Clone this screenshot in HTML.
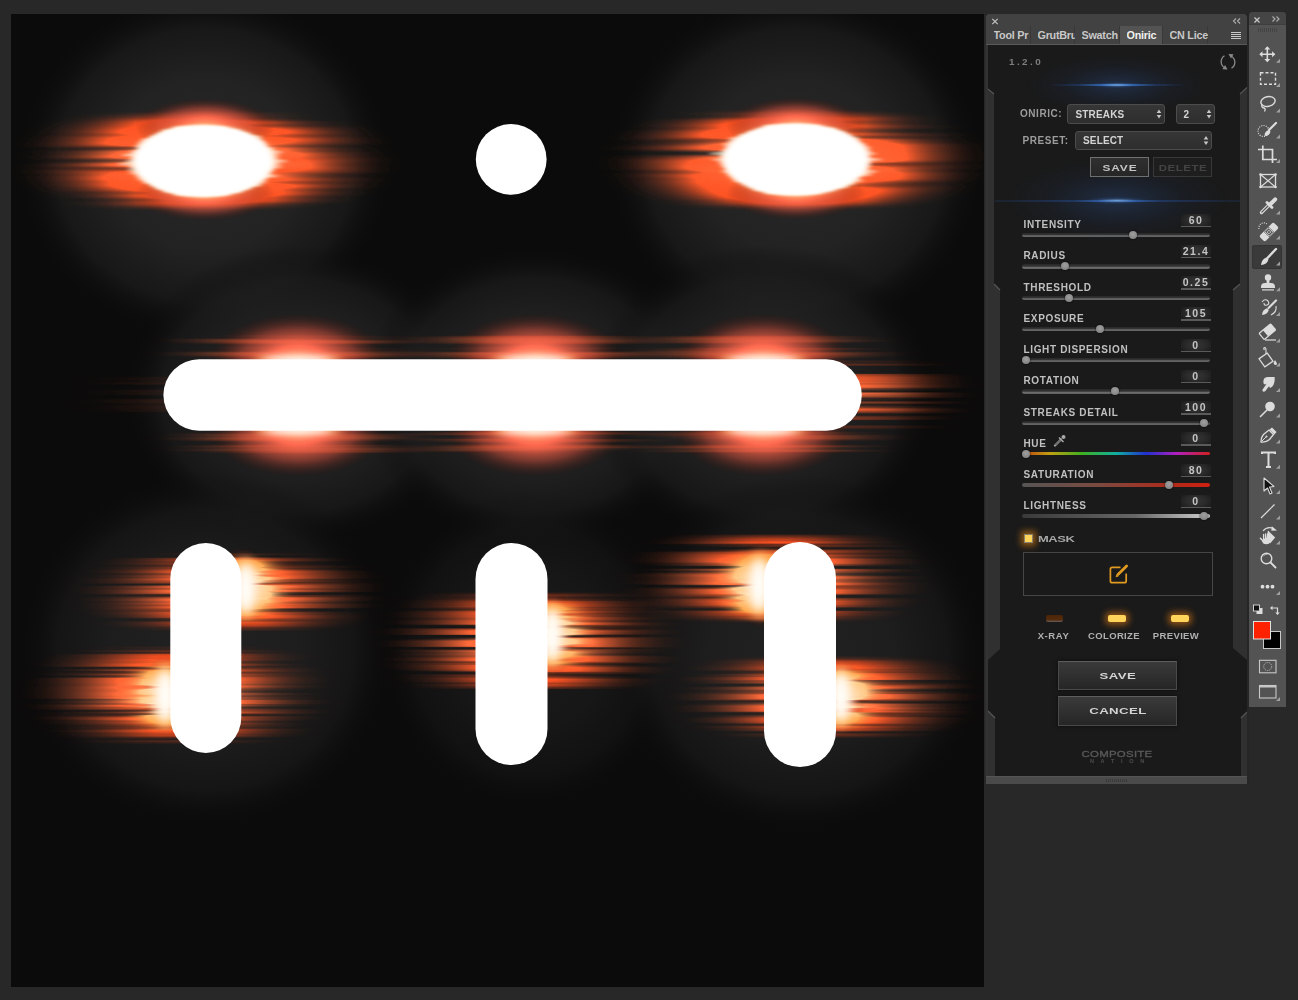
<!DOCTYPE html>
<html><head><meta charset="utf-8"><style>
html,body{margin:0;padding:0;}
body{width:1298px;height:1000px;background:#282828;position:relative;overflow:hidden;font-family:"Liberation Sans", sans-serif;}
.abs{position:absolute;}
.t{position:absolute;white-space:nowrap;font-family:"Liberation Sans", sans-serif;}
</style></head><body>
<svg class="abs" width="1298" height="1000" style="left:0;top:0">
<defs>
<clipPath id="cv"><rect x="11" y="14" width="973" height="973"/></clipPath>
<radialGradient id="halo"><stop offset="0" stop-color="#2c2c2c"/><stop offset="0.5" stop-color="#252525"/><stop offset="0.78" stop-color="#1c1c1c" stop-opacity="0.85"/><stop offset="1" stop-color="#0b0b0b" stop-opacity="0"/></radialGradient>
<radialGradient id="src"><stop offset="0" stop-color="#ff9060"/><stop offset="0.55" stop-color="#ff6030"/><stop offset="0.85" stop-color="#ff5020" stop-opacity="0.8"/><stop offset="1" stop-color="#ff5020" stop-opacity="0"/></radialGradient>
<radialGradient id="red"><stop offset="0" stop-color="#ffa070"/><stop offset="0.3" stop-color="#ff6a50"/><stop offset="0.65" stop-color="#c04a38" stop-opacity="0.55"/><stop offset="1" stop-color="#401008" stop-opacity="0"/></radialGradient>
<radialGradient id="hot"><stop offset="0" stop-color="#ffffff"/><stop offset="0.6" stop-color="#fffaf0"/><stop offset="0.82" stop-color="#ffc870" stop-opacity="0.8"/><stop offset="1" stop-color="#ff7040" stop-opacity="0"/></radialGradient>
<radialGradient id="hot2"><stop offset="0" stop-color="#ffffff"/><stop offset="0.4" stop-color="#fff2c8"/><stop offset="0.7" stop-color="#ffb050" stop-opacity="0.85"/><stop offset="1" stop-color="#ff7030" stop-opacity="0"/></radialGradient>
<radialGradient id="hot3"><stop offset="0" stop-color="#ffffff"/><stop offset="0.75" stop-color="#fff8e8"/><stop offset="0.9" stop-color="#ffc070" stop-opacity="0.9"/><stop offset="1" stop-color="#ff7030" stop-opacity="0"/></radialGradient>
<filter id="sk" filterUnits="userSpaceOnUse" x="11" y="14" width="973" height="973" color-interpolation-filters="sRGB">
 <feTurbulence type="fractalNoise" baseFrequency="0.01 0.17" numOctaves="2" seed="5" result="n"/>
 <feColorMatrix in="n" type="matrix" values="0 0 0 0 0  0 0 0 0 0  0 0 0 0 0  5 0 0 0 -1.75" result="m"/>
 <feComposite in="SourceGraphic" in2="m" operator="in" result="c"/>
 <feGaussianBlur in="c" stdDeviation="45 0.7" result="b"/>
 <feComponentTransfer in="b"><feFuncA type="linear" slope="2.4"/></feComponentTransfer>
</filter>
<filter id="skb" filterUnits="userSpaceOnUse" x="11" y="14" width="973" height="973" color-interpolation-filters="sRGB">
 <feTurbulence type="fractalNoise" baseFrequency="0.01 0.12" numOctaves="2" seed="3" result="n"/>
 <feColorMatrix in="n" type="matrix" values="0 0 0 0 0  0 0 0 0 0  0 0 0 0 0  4.5 0 0 0 -1.35" result="m"/>
 <feComposite in="SourceGraphic" in2="m" operator="in" result="c"/>
 <feGaussianBlur in="c" stdDeviation="44 0.8" result="b"/>
 <feComponentTransfer in="b"><feFuncA type="linear" slope="3.3"/></feComponentTransfer>
</filter>
<filter id="sk2" filterUnits="userSpaceOnUse" x="11" y="14" width="973" height="973" color-interpolation-filters="sRGB">
 <feTurbulence type="fractalNoise" baseFrequency="0.01 0.16" numOctaves="2" seed="8" result="n"/>
 <feColorMatrix in="n" type="matrix" values="0 0 0 0 0  0 0 0 0 0  0 0 0 0 0  4 0 0 0 -1.1" result="m"/>
 <feComposite in="SourceGraphic" in2="m" operator="in" result="c"/>
 <feGaussianBlur in="c" stdDeviation="14 0.5" result="b"/>
 <feComponentTransfer in="b"><feFuncA type="linear" slope="3"/></feComponentTransfer>
</filter>
<filter id="bl6" x="-50%" y="-50%" width="200%" height="200%"><feGaussianBlur stdDeviation="5 3"/></filter>
<filter id="bl3" x="-50%" y="-50%" width="200%" height="200%"><feGaussianBlur stdDeviation="3 1.5"/></filter>
<filter id="bl15" x="-50%" y="-50%" width="200%" height="200%"><feGaussianBlur stdDeviation="2.5 1"/></filter>
</defs>
<g clip-path="url(#cv)">
<rect x="11" y="14" width="973" height="973" fill="#0b0b0b"/>
<ellipse cx="205" cy="165" rx="190" ry="175" fill="url(#halo)" opacity="0.9"/>
<ellipse cx="796" cy="165" rx="190" ry="175" fill="url(#halo)" opacity="0.9"/>
<ellipse cx="298" cy="395" rx="175" ry="150" fill="url(#halo)" opacity="0.85"/>
<ellipse cx="535" cy="395" rx="175" ry="150" fill="url(#halo)" opacity="0.85"/>
<ellipse cx="763" cy="395" rx="175" ry="150" fill="url(#halo)" opacity="0.85"/>
<ellipse cx="206" cy="650" rx="190" ry="180" fill="url(#halo)" opacity="0.7"/>
<ellipse cx="530" cy="650" rx="150" ry="160" fill="url(#halo)" opacity="0.45"/>
<ellipse cx="800" cy="655" rx="190" ry="180" fill="url(#halo)" opacity="0.7"/>
<g filter="url(#skb)">
<ellipse cx="205" cy="161" rx="98" ry="50" fill="url(#src)"/>
<ellipse cx="796" cy="160" rx="100" ry="50" fill="url(#src)"/>
</g>
<g filter="url(#sk)">
<ellipse cx="298" cy="340" rx="55" ry="5" fill="url(#src)" opacity="0.55"/>
<ellipse cx="535" cy="340" rx="55" ry="5" fill="url(#src)" opacity="0.55"/>
<ellipse cx="763" cy="340" rx="55" ry="5" fill="url(#src)" opacity="0.55"/>
<ellipse cx="298" cy="449" rx="55" ry="5" fill="url(#src)" opacity="0.55"/>
<ellipse cx="535" cy="449" rx="55" ry="5" fill="url(#src)" opacity="0.55"/>
<ellipse cx="763" cy="449" rx="55" ry="5" fill="url(#src)" opacity="0.55"/>
<ellipse cx="298" cy="353" rx="60" ry="6" fill="url(#src)" opacity="0.55"/>
<ellipse cx="535" cy="353" rx="60" ry="6" fill="url(#src)" opacity="0.55"/>
<ellipse cx="763" cy="353" rx="60" ry="6" fill="url(#src)" opacity="0.55"/>
<ellipse cx="298" cy="437" rx="60" ry="6" fill="url(#src)" opacity="0.55"/>
<ellipse cx="535" cy="437" rx="60" ry="6" fill="url(#src)" opacity="0.55"/>
<ellipse cx="763" cy="437" rx="60" ry="6" fill="url(#src)" opacity="0.55"/>
<ellipse cx="848" cy="395" rx="30" ry="36" fill="url(#src)" opacity="1"/>
<ellipse cx="172" cy="395" rx="6" ry="24" fill="url(#src)" opacity="0.5"/>
<ellipse cx="230" cy="592" rx="62" ry="40" fill="url(#src)" opacity="1"/>
<ellipse cx="178" cy="695" rx="62" ry="50" fill="url(#src)" opacity="1"/>
<ellipse cx="530" cy="642" rx="60" ry="52" fill="url(#src)" opacity="1"/>
<ellipse cx="776" cy="578" rx="60" ry="46" fill="url(#src)" opacity="1"/>
<ellipse cx="825" cy="697" rx="62" ry="42" fill="url(#src)" opacity="1"/>
</g>
<ellipse cx="205" cy="126" rx="70" ry="28" fill="url(#red)" opacity="1"/>
<ellipse cx="796" cy="125" rx="70" ry="28" fill="url(#red)" opacity="1"/>
<ellipse cx="205" cy="195" rx="70" ry="26" fill="url(#red)" opacity="0.9"/>
<ellipse cx="796" cy="194" rx="70" ry="26" fill="url(#red)" opacity="0.9"/>
<ellipse cx="298" cy="359" rx="88" ry="46" fill="url(#red)" opacity="1"/>
<ellipse cx="535" cy="359" rx="88" ry="46" fill="url(#red)" opacity="1"/>
<ellipse cx="763" cy="359" rx="88" ry="46" fill="url(#red)" opacity="1"/>
<ellipse cx="298" cy="431" rx="88" ry="46" fill="url(#red)" opacity="1"/>
<ellipse cx="535" cy="431" rx="88" ry="46" fill="url(#red)" opacity="1"/>
<ellipse cx="763" cy="431" rx="88" ry="46" fill="url(#red)" opacity="1"/>
<ellipse cx="240" cy="588" rx="30" ry="42" fill="url(#red)" opacity="0.6"/>
<ellipse cx="172" cy="695" rx="30" ry="45" fill="url(#red)" opacity="0.6"/>
<ellipse cx="547" cy="635" rx="30" ry="45" fill="url(#red)" opacity="0.6"/>
<ellipse cx="764" cy="585" rx="30" ry="45" fill="url(#red)" opacity="0.6"/>
<ellipse cx="836" cy="697" rx="30" ry="42" fill="url(#red)" opacity="0.6"/>
<g filter="url(#sk2)">
<ellipse cx="241" cy="588" rx="30" ry="36" fill="url(#hot2)"/>
<ellipse cx="170" cy="696" rx="30" ry="38" fill="url(#hot2)"/>
<ellipse cx="547" cy="635" rx="30" ry="38" fill="url(#hot2)"/>
<ellipse cx="764" cy="585" rx="30" ry="38" fill="url(#hot2)"/>
<ellipse cx="836" cy="697" rx="30" ry="36" fill="url(#hot2)"/>
</g>
<ellipse cx="204" cy="161" rx="74" ry="40" fill="url(#hot)" filter="url(#bl6)"/>
<ellipse cx="796" cy="160" rx="77" ry="40" fill="url(#hot)" filter="url(#bl6)"/>
<ellipse cx="298" cy="359" rx="48" ry="5" fill="url(#hot)" filter="url(#bl6)"/>
<ellipse cx="535" cy="359" rx="48" ry="5" fill="url(#hot)" filter="url(#bl6)"/>
<ellipse cx="763" cy="359" rx="48" ry="5" fill="url(#hot)" filter="url(#bl6)"/>
<ellipse cx="298" cy="431" rx="48" ry="5" fill="url(#hot)" filter="url(#bl6)"/>
<ellipse cx="535" cy="431" rx="48" ry="5" fill="url(#hot)" filter="url(#bl6)"/>
<ellipse cx="763" cy="431" rx="48" ry="5" fill="url(#hot)" filter="url(#bl6)"/>
<ellipse cx="246" cy="588" rx="14" ry="34" fill="url(#hot)" filter="url(#bl6)"/>
<ellipse cx="165" cy="696" rx="14" ry="36" fill="url(#hot)" filter="url(#bl6)"/>
<ellipse cx="552" cy="635" rx="14" ry="36" fill="url(#hot)" filter="url(#bl6)"/>
<ellipse cx="759" cy="585" rx="14" ry="36" fill="url(#hot)" filter="url(#bl6)"/>
<ellipse cx="841" cy="697" rx="14" ry="34" fill="url(#hot)" filter="url(#bl6)"/>
<g fill="#fff">
<circle cx="511.2" cy="159.4" r="35.4"/>
<rect x="163.4" y="359.3" width="698.4" height="71.5" rx="35.75"/>
<rect x="170.3" y="543" width="71" height="210" rx="35.5"/>
<rect x="475.5" y="543" width="72" height="222" rx="36"/>
<rect x="764" y="542" width="72" height="225" rx="36"/>
</g>
<g fill="#fff" filter="url(#bl15)">
<ellipse cx="200.3" cy="128" rx="28.4" ry="2.2" fill="#fff8e0"/>
<ellipse cx="200.7" cy="131" rx="40.0" ry="2.2" fill="#fff8e0"/>
<ellipse cx="202.7" cy="134" rx="47.0" ry="2.2" fill="#fff8e0"/>
<ellipse cx="205.9" cy="137" rx="57.1" ry="2.2" fill="#fff8e0"/>
<ellipse cx="201.3" cy="140" rx="62.2" ry="2.2" fill="#fff8e0"/>
<ellipse cx="201.7" cy="143" rx="65.4" ry="2.2" fill="#fff8e0"/>
<ellipse cx="200.3" cy="146" rx="66.2" ry="2.2" fill="#fff8e0"/>
<ellipse cx="206.9" cy="149" rx="69.3" ry="2.2" fill="#fff8e0"/>
<ellipse cx="206.0" cy="152" rx="78.0" ry="2.2" fill="#fff8e0"/>
<ellipse cx="201.0" cy="155" rx="80.0" ry="2.2" fill="#fff8e0"/>
<ellipse cx="204.5" cy="158" rx="75.6" ry="2.2" fill="#fff8e0"/>
<ellipse cx="206.3" cy="161" rx="82.2" ry="2.2" fill="#fff8e0"/>
<ellipse cx="200.2" cy="164" rx="82.9" ry="2.2" fill="#fff8e0"/>
<ellipse cx="204.9" cy="167" rx="77.8" ry="2.2" fill="#fff8e0"/>
<ellipse cx="200.9" cy="170" rx="74.6" ry="2.2" fill="#fff8e0"/>
<ellipse cx="200.2" cy="173" rx="71.8" ry="2.2" fill="#fff8e0"/>
<ellipse cx="206.4" cy="176" rx="72.4" ry="2.2" fill="#fff8e0"/>
<ellipse cx="201.9" cy="179" rx="65.5" ry="2.2" fill="#fff8e0"/>
<ellipse cx="204.1" cy="182" rx="63.0" ry="2.2" fill="#fff8e0"/>
<ellipse cx="206.3" cy="185" rx="57.0" ry="2.2" fill="#fff8e0"/>
<ellipse cx="202.8" cy="188" rx="48.6" ry="2.2" fill="#fff8e0"/>
<ellipse cx="202.9" cy="191" rx="40.4" ry="2.2" fill="#fff8e0"/>
<ellipse cx="201.9" cy="194" rx="28.3" ry="2.2" fill="#fff8e0"/>
<ellipse cx="792.3" cy="126.5" rx="30.3" ry="2.2" fill="#fff8e0"/>
<ellipse cx="797.0" cy="129.5" rx="40.8" ry="2.2" fill="#fff8e0"/>
<ellipse cx="796.3" cy="132.5" rx="49.8" ry="2.2" fill="#fff8e0"/>
<ellipse cx="794.7" cy="135.5" rx="57.3" ry="2.2" fill="#fff8e0"/>
<ellipse cx="793.6" cy="138.5" rx="65.9" ry="2.2" fill="#fff8e0"/>
<ellipse cx="793.6" cy="141.5" rx="67.1" ry="2.2" fill="#fff8e0"/>
<ellipse cx="794.2" cy="144.5" rx="72.7" ry="2.2" fill="#fff8e0"/>
<ellipse cx="798.0" cy="147.5" rx="73.5" ry="2.2" fill="#fff8e0"/>
<ellipse cx="796.5" cy="150.5" rx="75.5" ry="2.2" fill="#fff8e0"/>
<ellipse cx="792.8" cy="153.5" rx="84.2" ry="2.2" fill="#fff8e0"/>
<ellipse cx="793.8" cy="156.5" rx="75.4" ry="2.2" fill="#fff8e0"/>
<ellipse cx="796.9" cy="159.5" rx="85.7" ry="2.2" fill="#fff8e0"/>
<ellipse cx="794.6" cy="162.5" rx="77.6" ry="2.2" fill="#fff8e0"/>
<ellipse cx="795.7" cy="165.5" rx="75.7" ry="2.2" fill="#fff8e0"/>
<ellipse cx="797.6" cy="168.5" rx="72.6" ry="2.2" fill="#fff8e0"/>
<ellipse cx="799.6" cy="171.5" rx="78.5" ry="2.2" fill="#fff8e0"/>
<ellipse cx="799.7" cy="174.5" rx="73.5" ry="2.2" fill="#fff8e0"/>
<ellipse cx="794.3" cy="177.5" rx="64.3" ry="2.2" fill="#fff8e0"/>
<ellipse cx="798.2" cy="180.5" rx="65.8" ry="2.2" fill="#fff8e0"/>
<ellipse cx="799.5" cy="183.5" rx="57.0" ry="2.2" fill="#fff8e0"/>
<ellipse cx="798.5" cy="186.5" rx="51.0" ry="2.2" fill="#fff8e0"/>
<ellipse cx="793.5" cy="189.5" rx="41.4" ry="2.2" fill="#fff8e0"/>
<ellipse cx="793.1" cy="192.5" rx="29.9" ry="2.2" fill="#fff8e0"/>
</g>
<g fill="#fff" filter="url(#bl3)">
<ellipse cx="203.5" cy="161" rx="70" ry="36"/>
<ellipse cx="796" cy="159.5" rx="73" ry="36"/>
</g>
</g></svg>
<div class="abs" style="left:986px;top:14px;width:261px;height:770px;background:#1a1a1a;"></div>
<div class="abs" style="left:986px;top:14px;width:261px;height:12px;background:#424242;border-radius:3px 3px 0 0;"></div>
<div class="abs" style="left:986px;top:26px;width:261px;height:18px;background:#424242;"></div>
<div class="abs" style="left:986px;top:44px;width:261px;height:1px;background:#5a5a5a;"></div>
<div class="abs" style="left:987px;top:26px;width:44px;height:18px;background:#424242;border-right:1px solid #383838;box-sizing:border-box;overflow:hidden;"></div>
<div class="t" style="left:993.5px;top:29.93px;font-size:10.8px;line-height:10.8px;color:#c8c8c8;letter-spacing:-0.25px;font-weight:bold;white-space:nowrap;overflow:hidden;width:37px;">Tool Pr</div>
<div class="abs" style="left:1031px;top:26px;width:44px;height:18px;background:#424242;border-right:1px solid #383838;box-sizing:border-box;overflow:hidden;"></div>
<div class="t" style="left:1037.5px;top:29.93px;font-size:10.8px;line-height:10.8px;color:#c8c8c8;letter-spacing:-0.25px;font-weight:bold;white-space:nowrap;overflow:hidden;width:37px;">GrutBru</div>
<div class="abs" style="left:1075px;top:26px;width:45px;height:18px;background:#424242;border-right:1px solid #383838;box-sizing:border-box;overflow:hidden;"></div>
<div class="t" style="left:1081.5px;top:29.93px;font-size:10.8px;line-height:10.8px;color:#c8c8c8;letter-spacing:-0.25px;font-weight:bold;white-space:nowrap;overflow:hidden;width:38px;">Swatch</div>
<div class="abs" style="left:1120px;top:26px;width:43px;height:18px;background:#535353;border-right:1px solid #383838;box-sizing:border-box;overflow:hidden;"></div>
<div class="t" style="left:1126.5px;top:29.93px;font-size:10.8px;line-height:10.8px;color:#f0f0f0;letter-spacing:-0.25px;font-weight:bold;white-space:nowrap;overflow:hidden;width:36px;">Oniric</div>
<div class="abs" style="left:1163px;top:26px;width:45px;height:18px;background:#424242;border-right:1px solid #383838;box-sizing:border-box;overflow:hidden;"></div>
<div class="t" style="left:1169.5px;top:29.93px;font-size:10.8px;line-height:10.8px;color:#c8c8c8;letter-spacing:-0.25px;font-weight:bold;white-space:nowrap;overflow:hidden;width:38px;">CN Lice</div>
<svg class="abs" style="left:0;top:0" width="1298" height="1000">
<polygon points="986,87.5 994,94 994,284 1000,290 1000,649 988,660 988,711 995,718 995,777 986,777" fill="#303030"/>
<polyline points="986,87.5 994,94" stroke="#555" stroke-width="1.2" fill="none"/>
<polyline points="994,284 1000,290" stroke="#555" stroke-width="1.2" fill="none"/>
<polyline points="988,711 995,718" stroke="#555" stroke-width="1.2" fill="none"/>
<polygon points="1247,87.5 1240,94 1240,284 1233,290 1233,648 1247,660 1247,712 1241,718 1241,777 1247,777" fill="#303030"/>
<polyline points="1247,87.5 1240,94" stroke="#555" stroke-width="1.2" fill="none"/>
<polyline points="1240,284 1233,290" stroke="#555" stroke-width="1.2" fill="none"/>
<polyline points="1247,712 1241,718" stroke="#555" stroke-width="1.2" fill="none"/>
<rect x="985.5" y="45" width="2.5" height="731" fill="#333"/>
<rect x="986" y="776" width="261" height="8" fill="#4a4a4a"/><rect x="986" y="776" width="261" height="1" fill="#555"/>
</svg>
<div class="abs" style="left:1247px;top:12px;width:2px;height:772px;background:#262626;"></div>
<svg class="abs" style="left:0;top:0" width="1298" height="1000"><path d="M992.3 18.8 L997.7 24.2 M997.7 18.8 L992.3 24.2" stroke="#c8c8c8" stroke-width="1.1"/><path d="M1236 18.5 L1233.5 21 L1236 23.5 M1240 18.5 L1237.5 21 L1240 23.5" stroke="#aaa" stroke-width="1.2" fill="none"/><path d="M1231 32.5 H1241 M1231 34.5 H1241 M1231 36.5 H1241 M1231 38.5 H1241" stroke="#c8c8c8" stroke-width="1"/></svg>
<div class="t" style="left:1009px;top:57.94px;font-size:9px;line-height:9px;color:#7e7e7e;letter-spacing:2.2px;font-weight:bold;transform:scaleX(1.1);transform-origin:left;">1.2.0</div>
<svg class="abs" style="left:0;top:0" width="1298" height="1000"><path d="M1224.5 55.8 A7 7 0 0 0 1225 68" stroke="#8a8a8a" stroke-width="1.3" fill="none"/><path d="M1231.5 68.2 A7 7 0 0 0 1231 56" stroke="#8a8a8a" stroke-width="1.3" fill="none"/><path d="M1228.5 54 L1233.5 54.2 L1231 58.5 Z" fill="#8a8a8a"/><path d="M1227.5 69.5 L1222.5 69.2 L1225 65 Z" fill="#8a8a8a"/></svg>
<div class="abs" style="left:1000px;top:45px;width:234px;height:80px;background:radial-gradient(ellipse 90px 30px at 117px 40px, rgba(40,70,120,0.45), rgba(30,50,90,0.15) 60%, rgba(0,0,0,0) 100%);"></div>
<div class="abs" style="left:1040px;top:84px;width:154px;height:2px;background:radial-gradient(ellipse 77px 1.2px at 77px 1px, #e8f4ff, #8ac0ff 12%, #3a7ad0 30%, rgba(40,90,180,0.3) 65%, rgba(0,0,0,0));"></div>
<div class="abs" style="left:1090px;top:82px;width:54px;height:6px;background:radial-gradient(ellipse 27px 3px at 27px 3px, rgba(160,210,255,0.55), rgba(60,120,220,0.2) 60%, rgba(0,0,0,0));"></div>
<div class="abs" style="left:995px;top:140px;width:245px;height:100px;background:radial-gradient(ellipse 110px 42px at 122px 60px, rgba(40,70,120,0.45), rgba(30,50,90,0.15) 60%, rgba(0,0,0,0) 100%);"></div>
<div class="abs" style="left:995px;top:199.5px;width:245px;height:2px;background:radial-gradient(ellipse 122px 1.2px at 122px 1px, #e8f4ff, #8ac0ff 10%, #3a7ad0 25%, rgba(40,90,180,0.35) 55%, rgba(40,90,180,0.15));"></div>
<div class="abs" style="left:1085px;top:197px;width:64px;height:7px;background:radial-gradient(ellipse 32px 3.5px at 32px 3.5px, rgba(160,210,255,0.55), rgba(60,120,220,0.2) 60%, rgba(0,0,0,0));"></div>
<div class="abs" style="left:1067px;top:104px;width:98px;height:20px;box-sizing:border-box;border:1px solid #4c4c4c;border-radius:3px;background:linear-gradient(#363636,#2e2e2e);"></div>
<div class="t" style="left:1075.5px;top:109.83px;font-size:10px;line-height:10px;color:#d4d4d4;letter-spacing:0.15px;font-weight:bold;">STREAKS</div>
<svg class="abs" style="left:0;top:0" width="1298" height="1000"><path d="M1156.7 113.0 L1159 109.5 L1161.3 113.0 Z M1156.7 115.0 L1159 118.5 L1161.3 115.0 Z" fill="#c8c8c8"/></svg>
<div class="abs" style="left:1176px;top:104px;width:39px;height:20px;box-sizing:border-box;border:1px solid #4c4c4c;border-radius:3px;background:linear-gradient(#363636,#2e2e2e);"></div>
<div class="t" style="left:1183.5px;top:109.83px;font-size:10px;line-height:10px;color:#d4d4d4;letter-spacing:0.15px;font-weight:bold;">2</div>
<svg class="abs" style="left:0;top:0" width="1298" height="1000"><path d="M1206.7 113.0 L1209 109.5 L1211.3 113.0 Z M1206.7 115.0 L1209 118.5 L1211.3 115.0 Z" fill="#c8c8c8"/></svg>
<div class="abs" style="left:1075px;top:131px;width:137px;height:19px;box-sizing:border-box;border:1px solid #4c4c4c;border-radius:3px;background:linear-gradient(#363636,#2e2e2e);"></div>
<div class="t" style="left:1083px;top:136.32px;font-size:10px;line-height:10px;color:#d4d4d4;letter-spacing:0.15px;font-weight:bold;">SELECT</div>
<svg class="abs" style="left:0;top:0" width="1298" height="1000"><path d="M1203.7 139.5 L1206 136.0 L1208.3 139.5 Z M1203.7 141.5 L1206 145.0 L1208.3 141.5 Z" fill="#c8c8c8"/></svg>
<div class="t" style="left:1020px;top:109.12px;font-size:10px;line-height:10px;color:#9c9c9c;letter-spacing:0.55px;font-weight:bold;">ONIRIC:</div>
<div class="t" style="left:1022.5px;top:135.82px;font-size:10px;line-height:10px;color:#9c9c9c;letter-spacing:0.55px;font-weight:bold;">PRESET:</div>
<div class="abs" style="left:1090px;top:157px;width:59px;height:20px;box-sizing:border-box;border:1px solid #707070;background:linear-gradient(#303030,#262626);"></div>
<div class="t" style="left:1089.5px;width:60px;text-align:center;top:164.40px;font-size:8.5px;line-height:8.5px;color:#c4c4c4;letter-spacing:0.6px;font-weight:bold;transform:scaleX(1.4);">SAVE</div>
<div class="abs" style="left:1153px;top:157px;width:59px;height:20px;box-sizing:border-box;border:1px solid #383838;background:#1e1e1e;"></div>
<div class="t" style="left:1152.5px;width:60px;text-align:center;top:164.40px;font-size:8.5px;line-height:8.5px;color:#444;letter-spacing:0.4px;font-weight:bold;transform:scaleX(1.35);">DELETE</div>
<div class="t" style="left:1023.5px;top:220.12px;font-size:10px;line-height:10px;color:#c0c0c0;letter-spacing:0.65px;font-weight:bold;">INTENSITY</div>
<div class="abs" style="left:1181px;top:213.5px;width:30px;height:12px;background:radial-gradient(ellipse 17px 9px at 15px 6px,#353535,#2b2b2b 55%,#1e1e1e 100%);"></div>
<div class="abs" style="left:1181px;top:225.5px;width:30px;height:1.5px;background:#5a5a5a;"></div>
<div class="t" style="left:1178.0px;width:36px;text-align:center;top:214.57px;font-size:10.5px;line-height:10.5px;color:#c4c4c4;letter-spacing:1.5px;font-weight:bold;">60</div>
<div class="abs" style="left:1021.5px;top:233.0px;width:188px;height:4.4px;border-radius:2.2px;background:linear-gradient(#262626 0,#363636 45%,#707070 72%,#5a5a5a 100%);"></div>
<div class="abs" style="left:1129px;top:231.2px;width:8px;height:8px;border-radius:4px;background:radial-gradient(circle at 50% 40%,#a0a0a0,#7a7a7a);box-shadow:0 0 2px #000;"></div>
<div class="t" style="left:1023.5px;top:251.38px;font-size:10px;line-height:10px;color:#c0c0c0;letter-spacing:0.65px;font-weight:bold;">RADIUS</div>
<div class="abs" style="left:1181px;top:244.75px;width:30px;height:12px;background:radial-gradient(ellipse 17px 9px at 15px 6px,#353535,#2b2b2b 55%,#1e1e1e 100%);"></div>
<div class="abs" style="left:1181px;top:256.75px;width:30px;height:1.5px;background:#5a5a5a;"></div>
<div class="t" style="left:1178.0px;width:36px;text-align:center;top:245.82px;font-size:10.5px;line-height:10.5px;color:#c4c4c4;letter-spacing:1.5px;font-weight:bold;">21.4</div>
<div class="abs" style="left:1021.5px;top:264.25px;width:188px;height:4.4px;border-radius:2.2px;background:linear-gradient(#262626 0,#363636 45%,#707070 72%,#5a5a5a 100%);"></div>
<div class="abs" style="left:1061px;top:262.45px;width:8px;height:8px;border-radius:4px;background:radial-gradient(circle at 50% 40%,#a0a0a0,#7a7a7a);box-shadow:0 0 2px #000;"></div>
<div class="t" style="left:1023.5px;top:282.62px;font-size:10px;line-height:10px;color:#c0c0c0;letter-spacing:0.65px;font-weight:bold;">THRESHOLD</div>
<div class="abs" style="left:1181px;top:276.0px;width:30px;height:12px;background:radial-gradient(ellipse 17px 9px at 15px 6px,#353535,#2b2b2b 55%,#1e1e1e 100%);"></div>
<div class="abs" style="left:1181px;top:288.0px;width:30px;height:1.5px;background:#5a5a5a;"></div>
<div class="t" style="left:1178.0px;width:36px;text-align:center;top:277.07px;font-size:10.5px;line-height:10.5px;color:#c4c4c4;letter-spacing:1.5px;font-weight:bold;">0.25</div>
<div class="abs" style="left:1021.5px;top:295.5px;width:188px;height:4.4px;border-radius:2.2px;background:linear-gradient(#262626 0,#363636 45%,#707070 72%,#5a5a5a 100%);"></div>
<div class="abs" style="left:1065.3px;top:293.7px;width:8px;height:8px;border-radius:4px;background:radial-gradient(circle at 50% 40%,#a0a0a0,#7a7a7a);box-shadow:0 0 2px #000;"></div>
<div class="t" style="left:1023.5px;top:313.88px;font-size:10px;line-height:10px;color:#c0c0c0;letter-spacing:0.65px;font-weight:bold;">EXPOSURE</div>
<div class="abs" style="left:1181px;top:307.25px;width:30px;height:12px;background:radial-gradient(ellipse 17px 9px at 15px 6px,#353535,#2b2b2b 55%,#1e1e1e 100%);"></div>
<div class="abs" style="left:1181px;top:319.25px;width:30px;height:1.5px;background:#5a5a5a;"></div>
<div class="t" style="left:1178.0px;width:36px;text-align:center;top:308.32px;font-size:10.5px;line-height:10.5px;color:#c4c4c4;letter-spacing:1.5px;font-weight:bold;">105</div>
<div class="abs" style="left:1021.5px;top:326.75px;width:188px;height:4.4px;border-radius:2.2px;background:linear-gradient(#262626 0,#363636 45%,#707070 72%,#5a5a5a 100%);"></div>
<div class="abs" style="left:1096px;top:324.95px;width:8px;height:8px;border-radius:4px;background:radial-gradient(circle at 50% 40%,#a0a0a0,#7a7a7a);box-shadow:0 0 2px #000;"></div>
<div class="t" style="left:1023.5px;top:345.12px;font-size:10px;line-height:10px;color:#c0c0c0;letter-spacing:0.65px;font-weight:bold;">LIGHT DISPERSION</div>
<div class="abs" style="left:1181px;top:338.5px;width:30px;height:12px;background:radial-gradient(ellipse 17px 9px at 15px 6px,#353535,#2b2b2b 55%,#1e1e1e 100%);"></div>
<div class="abs" style="left:1181px;top:350.5px;width:30px;height:1.5px;background:#5a5a5a;"></div>
<div class="t" style="left:1178.0px;width:36px;text-align:center;top:339.57px;font-size:10.5px;line-height:10.5px;color:#c4c4c4;letter-spacing:1.5px;font-weight:bold;">0</div>
<div class="abs" style="left:1021.5px;top:358.0px;width:188px;height:4.4px;border-radius:2.2px;background:linear-gradient(#262626 0,#363636 45%,#707070 72%,#5a5a5a 100%);"></div>
<div class="abs" style="left:1022.3px;top:356.2px;width:8px;height:8px;border-radius:4px;background:radial-gradient(circle at 50% 40%,#a0a0a0,#7a7a7a);box-shadow:0 0 2px #000;"></div>
<div class="t" style="left:1023.5px;top:376.38px;font-size:10px;line-height:10px;color:#c0c0c0;letter-spacing:0.65px;font-weight:bold;">ROTATION</div>
<div class="abs" style="left:1181px;top:369.75px;width:30px;height:12px;background:radial-gradient(ellipse 17px 9px at 15px 6px,#353535,#2b2b2b 55%,#1e1e1e 100%);"></div>
<div class="abs" style="left:1181px;top:381.75px;width:30px;height:1.5px;background:#5a5a5a;"></div>
<div class="t" style="left:1178.0px;width:36px;text-align:center;top:370.82px;font-size:10.5px;line-height:10.5px;color:#c4c4c4;letter-spacing:1.5px;font-weight:bold;">0</div>
<div class="abs" style="left:1021.5px;top:389.25px;width:188px;height:4.4px;border-radius:2.2px;background:linear-gradient(#262626 0,#363636 45%,#707070 72%,#5a5a5a 100%);"></div>
<div class="abs" style="left:1111px;top:387.45px;width:8px;height:8px;border-radius:4px;background:radial-gradient(circle at 50% 40%,#a0a0a0,#7a7a7a);box-shadow:0 0 2px #000;"></div>
<div class="t" style="left:1023.5px;top:407.62px;font-size:10px;line-height:10px;color:#c0c0c0;letter-spacing:0.65px;font-weight:bold;">STREAKS DETAIL</div>
<div class="abs" style="left:1181px;top:401.0px;width:30px;height:12px;background:radial-gradient(ellipse 17px 9px at 15px 6px,#353535,#2b2b2b 55%,#1e1e1e 100%);"></div>
<div class="abs" style="left:1181px;top:413.0px;width:30px;height:1.5px;background:#5a5a5a;"></div>
<div class="t" style="left:1178.0px;width:36px;text-align:center;top:402.07px;font-size:10.5px;line-height:10.5px;color:#c4c4c4;letter-spacing:1.5px;font-weight:bold;">100</div>
<div class="abs" style="left:1021.5px;top:420.5px;width:188px;height:4.4px;border-radius:2.2px;background:linear-gradient(#262626 0,#363636 45%,#707070 72%,#5a5a5a 100%);"></div>
<div class="abs" style="left:1200.3px;top:418.7px;width:8px;height:8px;border-radius:4px;background:radial-gradient(circle at 50% 40%,#a0a0a0,#7a7a7a);box-shadow:0 0 2px #000;"></div>
<div class="t" style="left:1023.5px;top:438.88px;font-size:10px;line-height:10px;color:#c0c0c0;letter-spacing:0.65px;font-weight:bold;">HUE</div>
<div class="abs" style="left:1181px;top:432.25px;width:30px;height:12px;background:radial-gradient(ellipse 17px 9px at 15px 6px,#353535,#2b2b2b 55%,#1e1e1e 100%);"></div>
<div class="abs" style="left:1181px;top:444.25px;width:30px;height:1.5px;background:#5a5a5a;"></div>
<div class="t" style="left:1178.0px;width:36px;text-align:center;top:433.32px;font-size:10.5px;line-height:10.5px;color:#c4c4c4;letter-spacing:1.5px;font-weight:bold;">0</div>
<div class="abs" style="left:1021.5px;top:452.45px;width:188px;height:3px;border-radius:1.5px;background:linear-gradient(90deg,#c04010,#c0a010 15%,#40b020 32%,#10b0a0 50%,#2030d0 66%,#b020c0 82%,#d02020);"></div>
<div class="abs" style="left:1022px;top:449.95px;width:8px;height:8px;border-radius:4px;background:radial-gradient(circle at 50% 40%,#a0a0a0,#7a7a7a);box-shadow:0 0 2px #000;"></div>
<div class="t" style="left:1023.5px;top:470.12px;font-size:10px;line-height:10px;color:#c0c0c0;letter-spacing:0.65px;font-weight:bold;">SATURATION</div>
<div class="abs" style="left:1181px;top:463.5px;width:30px;height:12px;background:radial-gradient(ellipse 17px 9px at 15px 6px,#353535,#2b2b2b 55%,#1e1e1e 100%);"></div>
<div class="abs" style="left:1181px;top:475.5px;width:30px;height:1.5px;background:#5a5a5a;"></div>
<div class="t" style="left:1178.0px;width:36px;text-align:center;top:464.57px;font-size:10.5px;line-height:10.5px;color:#c4c4c4;letter-spacing:1.5px;font-weight:bold;">80</div>
<div class="abs" style="left:1021.5px;top:483.2px;width:188px;height:4px;border-radius:2px;background:linear-gradient(90deg,#555,#7a4a40 40%,#b02a1a 80%,#d02010);"></div>
<div class="abs" style="left:1164.8px;top:481.2px;width:8px;height:8px;border-radius:4px;background:radial-gradient(circle at 50% 40%,#a0a0a0,#7a7a7a);box-shadow:0 0 2px #000;"></div>
<div class="t" style="left:1023.5px;top:501.38px;font-size:10px;line-height:10px;color:#c0c0c0;letter-spacing:0.65px;font-weight:bold;">LIGHTNESS</div>
<div class="abs" style="left:1181px;top:494.75px;width:30px;height:12px;background:radial-gradient(ellipse 17px 9px at 15px 6px,#353535,#2b2b2b 55%,#1e1e1e 100%);"></div>
<div class="abs" style="left:1181px;top:506.75px;width:30px;height:1.5px;background:#5a5a5a;"></div>
<div class="t" style="left:1178.0px;width:36px;text-align:center;top:495.82px;font-size:10.5px;line-height:10.5px;color:#c4c4c4;letter-spacing:1.5px;font-weight:bold;">0</div>
<div class="abs" style="left:1021.5px;top:514.45px;width:188px;height:4px;border-radius:2px;background:linear-gradient(90deg,#3a3a3a,#666 60%,#cfcfcf);"></div>
<div class="abs" style="left:1200.3px;top:512.45px;width:8px;height:8px;border-radius:4px;background:radial-gradient(circle at 50% 40%,#a0a0a0,#7a7a7a);box-shadow:0 0 2px #000;"></div>
<svg class="abs" style="left:0;top:0" width="1298" height="1000"><path d="M1055 445.5 L1061 439.5" stroke="#a8a8a8" stroke-width="2.2" stroke-linecap="round"/><path d="M1055.3 445.2 L1060.7 439.8" stroke="#1b1b1b" stroke-width="0.8"/><path d="M1059 437.5 L1063.5 442" stroke="#a8a8a8" stroke-width="1.5"/><circle cx="1063.5" cy="437" r="2" fill="#a8a8a8"/></svg>
<div class="abs" style="left:1023.8px;top:534.2px;width:9.2px;height:9.3px;box-sizing:border-box;border:1px solid #8a8070;background:#ffd45a;box-shadow:0 0 6px 3px rgba(255,150,20,0.5);"></div>
<div class="t" style="left:1038px;top:534.48px;font-size:9.5px;line-height:9.5px;color:#a8a8a8;letter-spacing:-0.3px;font-weight:bold;transform:scaleX(1.36);transform-origin:left;">MASK</div>
<div class="abs" style="left:1022.5px;top:552px;width:190.5px;height:44px;box-sizing:border-box;border:1px solid #464646;"></div>
<svg class="abs" style="left:0;top:0" width="1298" height="1000"><path d="M1120.5 567.4 H1112.2 Q1110.4 567.4 1110.4 569.2 V580.9 Q1110.4 582.7 1112.2 582.7 H1124.4 Q1126.2 582.7 1126.2 580.9 V573.5" stroke="#e09a20" stroke-width="1.7" fill="none"/><path d="M1118 574.6 L1126.6 566" stroke="#e09a20" stroke-width="2.8" stroke-linecap="round"/><path d="M1115.6 577.3 L1116.4 574.2 L1118.7 576.5 Z" fill="#e09a20"/></svg>
<div class="abs" style="left:1046px;top:615px;width:17px;height:7px;border-radius:2px;background:linear-gradient(#4a2408,#552c0c 70%,#6a6060);"></div>
<div class="abs" style="left:1108px;top:615px;width:18px;height:7px;border-radius:2px;background:#ffd45a;box-shadow:0 0 6px 3px rgba(255,140,20,0.5);"></div>
<div class="abs" style="left:1171px;top:615px;width:18px;height:7px;border-radius:2px;background:#ffd45a;box-shadow:0 0 6px 3px rgba(255,140,20,0.5);"></div>
<div class="t" style="left:1033.5px;width:40px;text-align:center;top:630.68px;font-size:9.5px;line-height:9.5px;color:#b0b0b0;letter-spacing:0.6px;font-weight:bold;">X-RAY</div>
<div class="t" style="left:1084.0px;width:60px;text-align:center;top:630.68px;font-size:9.5px;line-height:9.5px;color:#b0b0b0;letter-spacing:0.35px;font-weight:bold;">COLORIZE</div>
<div class="t" style="left:1146.0px;width:60px;text-align:center;top:630.68px;font-size:9.5px;line-height:9.5px;color:#b0b0b0;letter-spacing:0.35px;font-weight:bold;">PREVIEW</div>
<div class="abs" style="left:1058px;top:661px;width:119px;height:29px;box-sizing:border-box;border:1px solid #4a4a4a;border-top-color:#5e5e5e;background:linear-gradient(#3a3a3a,#262626);box-shadow:0 0 4px rgba(0,0,0,0.6);"></div>
<div class="t" style="left:1067.5px;width:100px;text-align:center;top:672.17px;font-size:8.8px;line-height:8.8px;color:#d4d4d4;letter-spacing:0.3px;font-weight:bold;transform:scaleX(1.5);">SAVE</div>
<div class="abs" style="left:1058px;top:696px;width:119px;height:29.5px;box-sizing:border-box;border:1px solid #4a4a4a;border-top-color:#5e5e5e;background:linear-gradient(#3a3a3a,#262626);box-shadow:0 0 4px rgba(0,0,0,0.6);"></div>
<div class="t" style="left:1067.5px;width:100px;text-align:center;top:707.42px;font-size:8.8px;line-height:8.8px;color:#d4d4d4;letter-spacing:0.3px;font-weight:bold;transform:scaleX(1.5);">CANCEL</div>
<div class="t" style="left:1067.4px;width:100px;text-align:center;top:749.77px;font-size:8.8px;line-height:8.8px;color:#5a5a5a;letter-spacing:0.2px;font-weight:normal;transform:scaleX(1.3);-webkit-text-stroke:0.3px #5a5a5a;">COMPOSITE</div>
<div class="t" style="left:1078.5px;width:80px;text-align:center;top:758.95px;font-size:5.5px;line-height:5.5px;color:#4e4e4e;letter-spacing:2.6px;font-weight:bold;">N A T I O N</div>
<div class="abs" style="left:1106px;top:778.5px;width:22px;height:3px;background:repeating-linear-gradient(90deg,#3a3a3a 0 1px,transparent 1px 2px);"></div>
<div class="abs" style="left:1249px;top:12px;width:37px;height:695px;background:#535353;border-radius:4px 4px 0 0;"></div>
<div class="abs" style="left:1249px;top:12px;width:37px;height:12px;background:#454545;border-radius:4px 4px 0 0;"></div>
<div class="abs" style="left:1249px;top:24px;width:37px;height:1px;background:#3e3e3e;"></div>
<div class="abs" style="left:1258px;top:28px;width:19px;height:4px;background:repeating-linear-gradient(90deg,#444 0 1px,transparent 1px 2px);"></div>
<div class="abs" style="left:1252px;top:245px;width:30px;height:24px;box-sizing:border-box;background:#3a3a3a;border:1px solid #333;border-radius:2px;"></div>
<svg class="abs" style="left:0;top:0" width="1298" height="1000"><path d="M1254.5 17.5 L1259.5 22.5 M1259.5 17.5 L1254.5 22.5" stroke="#c8c8c8" stroke-width="1.3"/><path d="M1272.5 16.5 L1275 19 L1272.5 21.5 M1276.5 16.5 L1279 19 L1276.5 21.5" stroke="#aaa" stroke-width="1.2" fill="none"/><path d="M1267.3 47.2 V61.2 M1260.3 54.2 H1274.3" stroke="#dcdcdc" stroke-width="1.6"/><path d="M1267.3 46.2 l-3 3.2 h6 Z M1267.3 62.2 l-3 -3.2 h6 Z M1259.3 54.2 l3.2 -3 v6 Z M1275.3 54.2 l-3.2 -3 v6 Z" fill="#dcdcdc"/><path d="M1280 58.7 L1280 62.7 L1276 62.7 Z" fill="#a0a0a0"/><rect x="1260.5" y="72.8" width="15" height="11.5" fill="none" stroke="#dcdcdc" stroke-width="1.4" stroke-dasharray="3 2"/><path d="M1280 83.0 L1280 87.0 L1276 87.0 Z" fill="#a0a0a0"/><ellipse cx="1268" cy="101.5" rx="7.2" ry="4.8" transform="rotate(-12 1268 101.5)" fill="none" stroke="#dcdcdc" stroke-width="1.4"/><path d="M1262 104.5 q-1 3 2 3.5 q2 .5 .5 3.5" fill="none" stroke="#dcdcdc" stroke-width="1.3"/><path d="M1280 108.5 L1280 112.5 L1276 112.5 Z" fill="#a0a0a0"/><circle cx="1263.5" cy="131" r="5.5" fill="none" stroke="#dcdcdc" stroke-width="1.2" stroke-dasharray="1 1.3"/><path d="M1276 123 L1269 130" stroke="#dcdcdc" stroke-width="2.2" stroke-linecap="round"/><path d="M1264.5 136 q0 -5 4.5 -6 l1.5 1.5 q-1 4.5 -6 4.5 Z" fill="#dcdcdc"/><path d="M1280 134.5 L1280 138.5 L1276 138.5 Z" fill="#a0a0a0"/><path d="M1258 149.5 H1272.5 V163 M1262.8 145.5 V159.5 H1277" fill="none" stroke="#dcdcdc" stroke-width="1.7"/><path d="M1280 159.0 L1280 163.0 L1276 163.0 Z" fill="#a0a0a0"/><rect x="1260.5" y="174.5" width="15" height="12.5" fill="none" stroke="#dcdcdc" stroke-width="1.3"/><path d="M1260.5 174.5 L1275.5 187 M1275.5 174.5 L1260.5 187" stroke="#dcdcdc" stroke-width="1.2"/><circle cx="1260.5" cy="174.5" r="1.3" fill="#dcdcdc"/><circle cx="1275.5" cy="174.5" r="1.3" fill="#dcdcdc"/><circle cx="1260.5" cy="187" r="1.3" fill="#dcdcdc"/><circle cx="1275.5" cy="187" r="1.3" fill="#dcdcdc"/><path d="M1261.5 212.5 L1269 205" stroke="#dcdcdc" stroke-width="3.4" stroke-linecap="round" fill="none"/><path d="M1261.8 212.2 L1268.5 205.5" stroke="#535353" stroke-width="1.2" stroke-linecap="round"/><path d="M1267 202.5 L1272 207.5" stroke="#dcdcdc" stroke-width="2.8" stroke-linecap="round"/><path d="M1270 204.5 L1275.2 199.3" stroke="#dcdcdc" stroke-width="4" stroke-linecap="round"/><path d="M1280 210.5 L1280 214.5 L1276 214.5 Z" fill="#a0a0a0"/><g transform="rotate(-45 1269 232)"><rect x="1259" y="228" width="20" height="8" rx="2" fill="#dcdcdc"/><rect x="1265.5" y="228" width="7" height="8" fill="#535353"/><rect x="1266.3" y="228.8" width="5.4" height="6.4" fill="none" stroke="#dcdcdc" stroke-width="0.9"/><circle cx="1268" cy="231" r=".7" fill="#dcdcdc"/><circle cx="1270" cy="231" r=".7" fill="#dcdcdc"/><circle cx="1268" cy="233" r=".7" fill="#dcdcdc"/><circle cx="1270" cy="233" r=".7" fill="#dcdcdc"/></g><path d="M1259 229 a5 5 0 0 1 8 -5" fill="none" stroke="#dcdcdc" stroke-width="1.1" stroke-dasharray="1 1.2"/><path d="M1280 235.5 L1280 239.5 L1276 239.5 Z" fill="#a0a0a0"/><path d="M1276 249 L1267.5 258" stroke="#dcdcdc" stroke-width="2.4" stroke-linecap="round"/><path d="M1261 265 q0.5 -6 5.5 -7.5 l2 2 q-1.5 5 -7.5 5.5 Z" fill="#dcdcdc"/><path d="M1280 261.5 L1280 265.5 L1276 265.5 Z" fill="#a0a0a0"/><circle cx="1268" cy="277.5" r="3.2" fill="#dcdcdc"/><rect x="1266.6" y="279" width="2.8" height="4" fill="#dcdcdc"/><path d="M1261 287 q0 -4 4 -4 h6 q4 0 4 4 v1 h-14 Z" fill="#dcdcdc"/><rect x="1262" y="289.3" width="12" height="1.2" fill="#dcdcdc"/><path d="M1280 287.2 L1280 291.2 L1276 291.2 Z" fill="#a0a0a0"/><path d="M1262 302 q3 -4 6 -1 q2 3 -1 4 q-3 1 -3 -2" fill="none" stroke="#dcdcdc" stroke-width="1.1"/><path d="M1276 300.5 L1268.5 308" stroke="#dcdcdc" stroke-width="2.2" stroke-linecap="round"/><path d="M1262 315 q0.5 -5.5 5 -6.8 l1.8 1.8 q-1.3 4.5 -6.8 5 Z" fill="#dcdcdc"/><path d="M1276 306 q1 6 -5 9" fill="none" stroke="#dcdcdc" stroke-width="1.1"/><path d="M1280 311.9 L1280 315.9 L1276 315.9 Z" fill="#a0a0a0"/><g transform="rotate(-40 1267 332)"><rect x="1260" y="328" width="15" height="8" rx="1" fill="none" stroke="#dcdcdc" stroke-width="1.3"/><rect x="1265" y="328" width="10" height="8" fill="#dcdcdc"/></g><path d="M1265 340 H1276" stroke="#dcdcdc" stroke-width="1.2"/><path d="M1280 338.5 L1280 342.5 L1276 342.5 Z" fill="#a0a0a0"/><g transform="rotate(-35 1266 360)"><rect x="1261" y="355" width="10" height="10" fill="none" stroke="#dcdcdc" stroke-width="1.3"/></g><path d="M1264.5 350 q-1.5 -2 0 -2.5 q1.5 0 1.5 2.5 v4" fill="none" stroke="#dcdcdc" stroke-width="1.1"/><path d="M1275 360 q-2 3 -1 4 a1.6 1.6 0 0 0 3 0 q0 -1 -2 -4 Z" fill="#dcdcdc"/><path d="M1280 362.5 L1280 366.5 L1276 366.5 Z" fill="#a0a0a0"/><path d="M1263.6 383.5 Q1262.4 377.5 1267.5 377 L1274.6 377 Q1275.5 385.5 1270 388 L1269 386.2 L1265.2 391.2 Q1262.6 392.6 1262.3 390 L1266.8 383.6 Q1265.2 385.2 1263.6 383.5 Z" fill="#dcdcdc"/><path d="M1280 387.9 L1280 391.9 L1276 391.9 Z" fill="#a0a0a0"/><circle cx="1270" cy="406.5" r="4.8" fill="#dcdcdc"/><path d="M1260.5 416.5 L1266.5 410.5" stroke="#dcdcdc" stroke-width="1.6" stroke-linecap="round"/><path d="M1280 413.5 L1280 417.5 L1276 417.5 Z" fill="#a0a0a0"/><path d="M1261 442 q0 -5 3 -8 l5 -4 l4.5 4.5 l-4 5 q-3 3 -8.5 2.5 Z" fill="none" stroke="#dcdcdc" stroke-width="1.3"/><path d="M1269.5 429.5 l2.5 -2 l4.5 4.5 l-2 2.5 Z" fill="#dcdcdc"/><path d="M1261.5 441.5 L1266 437" stroke="#dcdcdc" stroke-width="1"/><circle cx="1266.5" cy="436.5" r="1" fill="#dcdcdc"/><path d="M1280 439.5 L1280 443.5 L1276 443.5 Z" fill="#a0a0a0"/><path d="M1262 454 V452.5 H1275 V454 M1268.5 452.5 V467 M1266 467 H1271" fill="none" stroke="#dcdcdc" stroke-width="2"/><path d="M1280 464.8 L1280 468.8 L1276 468.8 Z" fill="#a0a0a0"/><path d="M1264 478 L1264 491 L1267.5 488 L1270 494 L1272 493 L1269.5 487 L1274 486.5 Z" fill="#111" stroke="#dcdcdc" stroke-width="1.1" stroke-linejoin="round"/><path d="M1280 490.1 L1280 494.1 L1276 494.1 Z" fill="#a0a0a0"/><path d="M1261 518 L1274.5 504.5" stroke="#dcdcdc" stroke-width="1.2"/><path d="M1280 515.5 L1280 519.5 L1276 519.5 Z" fill="#a0a0a0"/><path d="M1263 531 Q1267 526 1273 528.3" fill="none" stroke="#dcdcdc" stroke-width="1.2"/><path d="M1271.8 526.3 L1277 530.5 L1271.3 530.8 Z" fill="#dcdcdc"/><path d="M1268 530.5 L1275.2 537.5 L1270.3 543.2 L1266 539 Z" fill="#dcdcdc"/><path d="M1263.6 534.5 V539 M1265.6 533.8 V539 M1267.6 534.2 V539 M1269.4 535.5 V540" stroke="#dcdcdc" stroke-width="1.3" stroke-linecap="round"/><ellipse cx="1266.3" cy="541.3" rx="3.9" ry="3" fill="#dcdcdc"/><path d="M1260.4 538.2 L1263.5 541.5" stroke="#dcdcdc" stroke-width="1.5" stroke-linecap="round"/><path d="M1280 540.5 L1280 544.5 L1276 544.5 Z" fill="#a0a0a0"/><circle cx="1266.5" cy="558.5" r="5.3" fill="none" stroke="#dcdcdc" stroke-width="1.4"/><path d="M1270.5 562.5 L1275.5 567.5" stroke="#dcdcdc" stroke-width="1.8" stroke-linecap="round"/><path d="M1263.5 556 q1.5 -2 4 -1.8" fill="none" stroke="#dcdcdc" stroke-width="0.7"/><circle cx="1262.5" cy="586.7" r="1.9" fill="#dcdcdc"/><circle cx="1267.5" cy="586.7" r="1.9" fill="#dcdcdc"/><circle cx="1272.5" cy="586.7" r="1.9" fill="#dcdcdc"/><path d="M1280 591.1 L1280 595.1 L1276 595.1 Z" fill="#a0a0a0"/><rect x="1256.5" y="608" width="6" height="6" fill="#dcdcdc"/><rect x="1253.5" y="605" width="6" height="6" fill="#111" stroke="#dcdcdc" stroke-width="0.9"/><path d="M1271 608 H1277.5 V613" fill="none" stroke="#dcdcdc" stroke-width="1.2"/><path d="M1270 608 l2.5 -2.2 v4.4 Z M1277.5 615 l-2.2 -2.5 h4.4 Z" fill="#dcdcdc"/><rect x="1263.5" y="631.5" width="17" height="17" fill="#000" stroke="#c8c8c8" stroke-width="1"/><rect x="1253.5" y="621.5" width="17" height="17.5" fill="#ff2200" stroke="#e0e0e0" stroke-width="1"/><rect x="1259.5" y="660.3" width="16.5" height="12.5" fill="none" stroke="#c8c8c8" stroke-width="1.1"/><circle cx="1267.7" cy="666.5" r="4" fill="none" stroke="#c8c8c8" stroke-width="0.9" stroke-dasharray="1 1"/><rect x="1259.5" y="685.5" width="16.5" height="12.5" fill="none" stroke="#c8c8c8" stroke-width="1.1"/><rect x="1259.5" y="685.5" width="16.5" height="2" fill="#c8c8c8"/><path d="M1280 697.0 L1280 701.0 L1276 701.0 Z" fill="#a0a0a0"/></svg>
</body></html>
